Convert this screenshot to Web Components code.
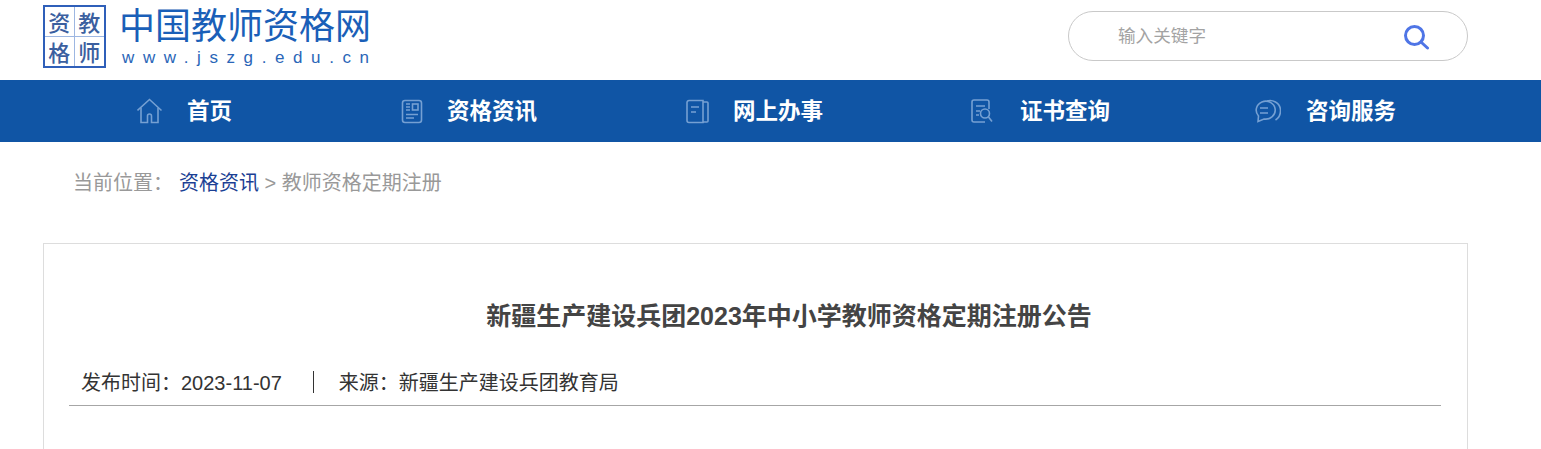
<!DOCTYPE html>
<html lang="zh">
<head>
<meta charset="utf-8">
<title>中国教师资格网</title>
<style>
  html, body {
    margin: 0;
    height: 100%;
    overflow: hidden;
    background: #fff;
    font-family: "Liberation Sans", "Noto Sans CJK SC", sans-serif;
  }
</style>
</head>
<body>
<site-header></site-header>
<main-nav>
  <nav-item icon="home" gap="23">首页</nav-item>
  <nav-item icon="news" gap="19">资格资讯</nav-item>
  <nav-item icon="book" gap="20">网上办事</nav-item>
  <nav-item icon="cert" gap="22">证书查询</nav-item>
  <nav-item icon="chat" gap="25">咨询服务</nav-item>
</main-nav>
<bread-crumb>
  <a slot="link" href="#">资格资讯</a>
  <span slot="current">教师资格定期注册</span>
</bread-crumb>
<article-card>
  <span slot="title">新疆生产建设兵团2023年中小学教师资格定期注册公告</span>
  <span slot="date">2023-11-07</span>
  <span slot="source">新疆生产建设兵团教育局</span>
</article-card>

<script>
const ICONS = {
  home: `<path d="M.5 12.500 12.500 1.500l12 11"/><path d="M4 10v14.500h6.500v-6.500a2 2 0 0 1 4 0v6.500H21V10"/>`,
  news: `<rect x="1.500" y="2.500" width="19" height="22" rx="2.500"/><rect x="11.500" y="6" width="5.500" height="6"/><path d="M5 6h4M5 9h4M5 12h4M5 16.500h12M5 20h8"/>`,
  book: `<path d="M17 2.500H3a2 2 0 0 0-2 2v18a2 2 0 0 0 2 2h14z"/><path d="M17 4h4a1 1 0 0 1 1 1v18a1 1 0 0 1-1 1h-4"/><path d="M5 9h8M5 14h5"/>`,
  cert: `<path d="M18 11V4a2 2 0 0 0-2-2H3a2 2 0 0 0-2 2v18a2 2 0 0 0 2 2h11"/><path d="M5 8h9M5 13h4M5 17h3"/><circle cx="14" cy="15.500" r="4.500"/><path d="m17.500 19 3.500 4.500"/>`,
  chat: `<path d="M4.500 18A9.500 9 0 1 1 10 21L4 23.500z"/><path d="M13 3c5-1.500 13 1 13.500 9 .2 4-2 8-5 10"/><path d="M6 10h8M6 15h8"/>`,
}

class SiteHeader extends HTMLElement {
  constructor() {
    super()
    this.attachShadow({ mode: "open" }).innerHTML = `
      <style>
        :host { display: flex; height: 80px; padding: 0 73px 0 43px; align-items: flex-start; box-sizing: border-box; }
        .seal {
          display: grid;
          grid-template: repeat(2, minmax(0, 1fr)) / repeat(2, minmax(0, 1fr));
          width: 63px;
          height: 63px;
          margin-top: 5px;
          box-sizing: border-box;
          border: 2px solid #2f5fb9;
          font: 500 22px/22px "Noto Sans CJK SC", sans-serif;
          color: #3b5f9f;
        }
        .seal span { display: flex; align-items: center; justify-content: center; }
        .seal span:nth-child(odd) { border-right: 1px solid #9db7e2; }
        .seal span:nth-child(-n+2) { border-bottom: 1px solid #9db7e2; }
        .brand { margin-left: 13px; padding-top: 4px; color: #1a5fb8; }
        .name { font: 400 36px/38px "Noto Sans CJK SC", sans-serif; white-space: nowrap; }
        .url {
          margin: 7px 0 0 3px;
          font: 17px/18px "Liberation Sans", sans-serif;
          letter-spacing: 8.600px;
          color: #2a66b8;
          white-space: nowrap;
        }
        .search {
          display: flex;
          align-items: center;
          justify-content: space-between;
          width: 400px;
          height: 50px;
          margin: 11px 0 0 auto;
          padding: 0 37px 0 49px;
          box-sizing: border-box;
          border: 1px solid #c9c9c9;
          border-radius: 25px;
          font: 17.600px "Noto Sans CJK SC", sans-serif;
          color: #a3a3a3;
        }
        .search span { padding-bottom: 4px; }
        svg { display: block; margin-top: 2px; }
      </style>
      <div class="seal"><span>资</span><span>教</span><span>格</span><span>师</span></div>
      <div class="brand">
        <div class="name">中国教师资格网</div>
        <div class="url">www.jszg.edu.cn</div>
      </div>
      <div class="search">
        <span>输入关键字</span>
        <svg width="27" height="26" viewBox="0 0 27 26" fill="none" stroke="#4f75e6" stroke-width="3" stroke-linecap="round">
          <circle cx="11.500" cy="11.500" r="9"/><path d="m18.500 18.500 6 5.500"/>
        </svg>
      </div>
    `
  }
}

class MainNav extends HTMLElement {
  constructor() {
    super()
    this.attachShadow({ mode: "open" }).innerHTML = `
      <style>
        :host {
          display: grid;
          grid-template-columns: 264px 285px 285px 283px auto;
          align-items: center;
          height: 62px;
          padding-left: 137px;
          background: #1055a5;
        }
      </style>
      <slot></slot>
    `
  }
}

class NavItem extends HTMLElement {
  constructor() {
    super()
    this.attachShadow({ mode: "open" })
  }

  connectedCallback() {
    const icon = ICONS[this.getAttribute("icon")]
    const gap = this.getAttribute("gap")
    this.shadowRoot.innerHTML = `
      <style>
        :host { display: flex; align-items: center; color: #fff; font: 700 22.500px/26px "Noto Sans CJK SC", sans-serif; }
        svg { display: block; margin-right: ${gap}px; }
        .label { margin-top: -5px; }
      </style>
      <svg width="27" height="26" viewBox="0 0 27 26" fill="none" stroke="#75a0d3" stroke-width="1.600">${icon}</svg>
      <span class="label"><slot></slot></span>
    `
  }
}

class BreadCrumb extends HTMLElement {
  constructor() {
    super()
    this.attachShadow({ mode: "open" }).innerHTML = `
      <style>
        :host { display: block; height: 101px; padding: 29px 0 0 73px; box-sizing: border-box; font-size: 20px; line-height: 24px; color: #999; }
        .label { margin-right: 6px; }
        ::slotted(a) { color: #1b3f94; text-decoration: none; }
      </style>
      <span class="label">当前位置：</span><slot name="link"></slot> &gt; <slot name="current"></slot>
    `
  }
}

class ArticleCard extends HTMLElement {
  constructor() {
    super()
    this.attachShadow({ mode: "open" }).innerHTML = `
      <style>
        :host {
          display: block;
          width: 1425px;
          height: 400px;
          margin-left: 43px;
          box-sizing: border-box;
          border: 1px solid #ddd;
          padding: 0 26px 0 25px;
        }
        h1 {
          margin: 0;
          padding: 55px 0 0 68px;
          text-align: center;
          font-size: 25px;
          line-height: 34px;
          font-weight: 700;
          color: #444;
        }
        .meta {
          display: flex;
          align-items: center;
          height: 68px;
          margin-top: 5px;
          padding: 20px 0 0 12px;
          box-sizing: border-box;
          border-bottom: 1px solid #a6a6a6;
          font-size: 20px;
          color: #333;
        }
        .rule { width: 1px; height: 22px; margin: 0 25px 0 31px; background: #333; }
      </style>
      <h1><slot name="title"></slot></h1>
      <div class="meta">
        <span>发布时间：<slot name="date"></slot></span>
        <span class="rule"></span>
        <span>来源：<slot name="source"></slot></span>
      </div>
    `
  }
}

customElements.define("site-header", SiteHeader)
customElements.define("main-nav", MainNav)
customElements.define("nav-item", NavItem)
customElements.define("bread-crumb", BreadCrumb)
customElements.define("article-card", ArticleCard)
</script>
</body>
</html>
